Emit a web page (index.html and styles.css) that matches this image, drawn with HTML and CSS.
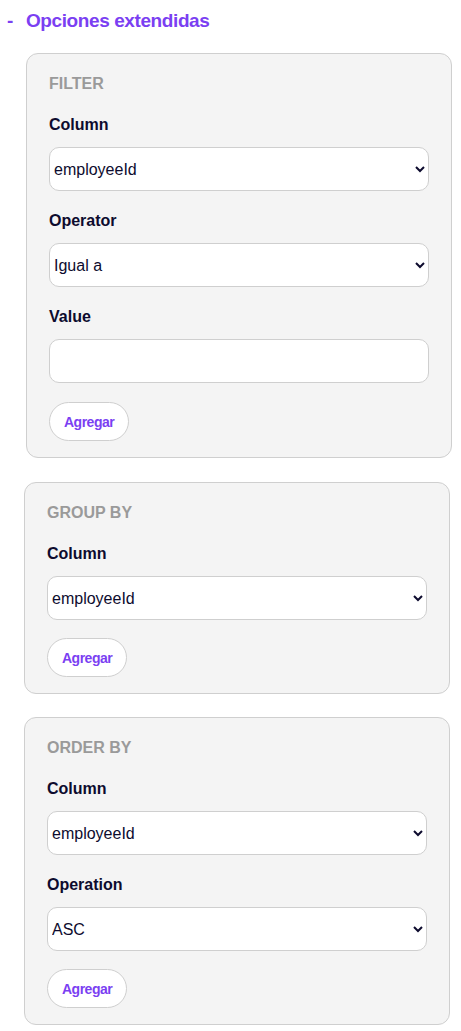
FILE: index.html
```html
<!DOCTYPE html>
<html lang="es">
<head>
    <meta charset="UTF-8">
    <title>Opciones extendidas</title>
    <link rel="stylesheet" href="styles.css">
</head>
<body>
<div class="page">
    <div class="toggle">
        <span class="dash">-</span>
        <span class="toggle-text">Opciones extendidas</span>
    </div>

    <div class="card card-filter">
        <div class="card-title">FILTER</div>
        <label class="field-label">Column</label>
        <select class="field">
            <option>employeeId</option>
        </select>
        <label class="field-label">Operator</label>
        <select class="field">
            <option>Igual a</option>
        </select>
        <label class="field-label">Value</label>
        <input class="field" type="text">
        <button class="btn">Agregar</button>
    </div>

    <div class="card">
        <div class="card-title">GROUP BY</div>
        <label class="field-label">Column</label>
        <select class="field">
            <option>employeeId</option>
        </select>
        <button class="btn">Agregar</button>
    </div>

    <div class="card">
        <div class="card-title">ORDER BY</div>
        <label class="field-label">Column</label>
        <select class="field">
            <option>employeeId</option>
        </select>
        <label class="field-label">Operation</label>
        <select class="field">
            <option>ASC</option>
        </select>
        <button class="btn">Agregar</button>
    </div>
</div>
</body>
</html>
```

FILE: styles.css
```css
*{
    margin: 0;
    padding: 0;
    box-sizing: border-box;
}
body{
    background: #fff;
    font-family: "Liberation Sans", Arial, sans-serif;
    color: #0d0b2e;
}
.page{
    padding: 9px 11px 0 24px;
}
.toggle{
    display: flex;
    align-items: center;
    gap: 13px;
    margin-left: -17px;
    color: #7b3ff2;
    font-weight: bold;
    font-size: 19px;
    line-height: 24px;
    letter-spacing: -0.4px;
}
.card{
    display: flex;
    flex-direction: column;
    align-items: flex-start;
    background: #f4f4f4;
    border: 1px solid #cfcfcf;
    border-radius: 12px;
    padding: 19px 22px 16px;
    margin-bottom: 23px;
}
.card-filter{
    margin: 20px -2px 24px 2px;
}
.card-title{
    color: #9a9a9a;
    font-weight: bold;
    font-size: 16px;
    line-height: 22px;
    margin-bottom: 19px;
}
.field-label{
    font-weight: bold;
    font-size: 16px;
    line-height: 22px;
    margin-bottom: 11px;
}
.field{
    width: 100%;
    height: 44px;
    border: 1px solid #cfcfcf;
    border-radius: 10px;
    background: #fff;
    font-family: "Liberation Sans", Arial, sans-serif;
    font-size: 16px;
    color: #0d0b2e;
    padding: 0 8px 0 0;
    margin-bottom: 19px;
    outline: none;
}
input.field{
    padding: 0 10px;
    margin-bottom: 19px;
}
select.field + .btn{
    margin-top: -1px;
}
.btn{
    height: 39px;
    padding: 0 14px;
    border: 1px solid #cfcfcf;
    border-radius: 20px;
    background: #fff;
    color: #7b3ff2;
    font-family: "Liberation Sans", Arial, sans-serif;
    font-weight: bold;
    font-size: 14px;
    letter-spacing: -0.5px;
    cursor: pointer;
}
```
